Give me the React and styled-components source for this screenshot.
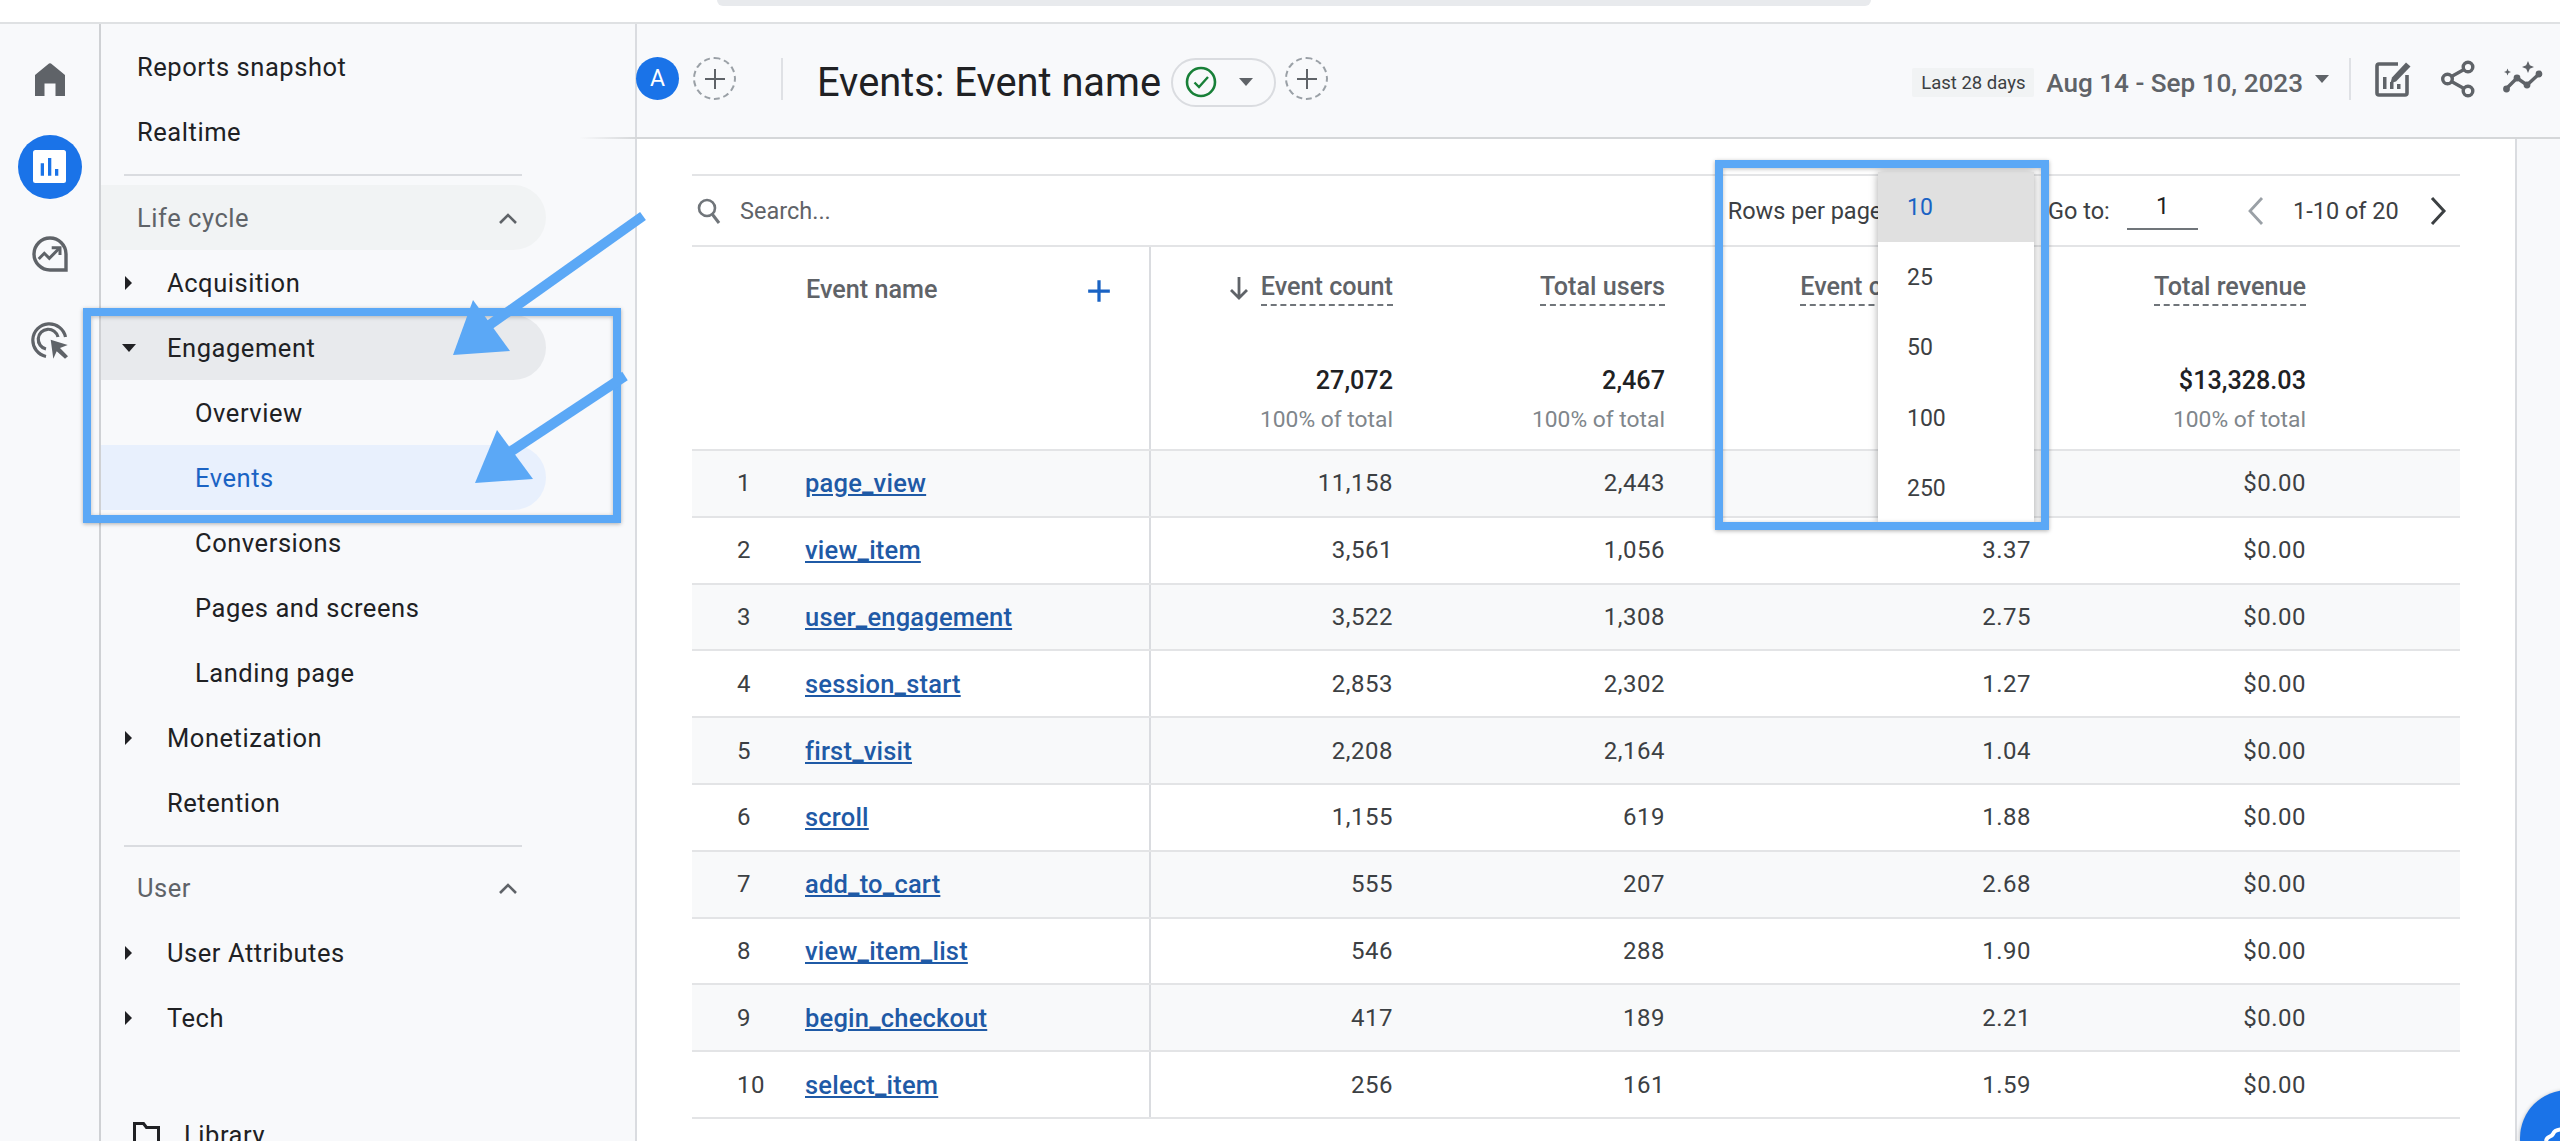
import React from "react";
import styled, { createGlobalStyle } from "styled-components";

const GlobalStyle = createGlobalStyle`
  html, body {
    margin: 0;
    padding: 0;
    background: #ffffff;
    overflow: hidden;
  }
  * {
    box-sizing: border-box;
  }
`;

const Page = styled.div`
  position: relative;
  width: 2560px;
  height: 1141px;
  overflow: hidden;
  display: flex;
  flex-direction: column;
  font-family: Roboto, "Liberation Sans", sans-serif;
  color: #202124;
`;

const TopBar = styled.div`
  flex: none;
  height: 24px;
  background: #ffffff;
  border-bottom: 2px solid #dfe1e3;
  padding-left: 717px;
`;

const AddressBar = styled.div`
  width: 1154px;
  height: 6px;
  background: #e8eaed;
  border-radius: 0 0 8px 8px;
`;

const Body = styled.div`
  flex: 1;
  display: flex;
  min-height: 0;
`;

const Rail = styled.nav`
  flex: none;
  width: 101px;
  background: #f8f9fb;
  border-right: 2px solid #cfd1d4;
  padding-top: 12px;
`;

const RailItem = styled.div`
  height: 87px;
  display: flex;
  align-items: center;
  justify-content: center;
`;

const RailCircle = styled.div`
  width: 64px;
  height: 64px;
  border-radius: 50%;
  background: #1a73e8;
  display: flex;
  align-items: center;
  justify-content: center;
`;

const Sidebar = styled.aside`
  flex: none;
  width: 536px;
  background: #f8f9fb;
  border-right: 2px solid #dadce0;
  padding-top: 10px;
`;

const NavRow = styled.div`
  width: 445px;
  height: 65px;
  display: flex;
  align-items: center;
  padding-left: ${(p) => p.$indent}px;
  margin-top: ${(p) => p.$top || 0}px;
  font-size: 25.5px;
  letter-spacing: 0.55px;
  color: ${(p) => (p.$active ? "#1a63c4" : p.$section ? "#5f6368" : "#202124")};
  background: ${(p) =>
    p.$active ? "#e8f0fd" : p.$open ? "#e8eaed" : p.$shaded ? "#f1f3f4" : "transparent"};
  border-radius: ${(p) => (p.$active || p.$open || p.$shaded ? "0 33px 33px 0" : "0")};
`;

const CaretSlot = styled.span`
  flex: none;
  width: 45px;
  display: flex;
  justify-content: flex-start;
`;

const SectionChevron = styled.svg`
  margin-left: auto;
  margin-right: 27px;
`;

const FolderIcon = styled.svg`
  flex: none;
  margin-right: 24px;
`;

const Divider = styled.div`
  width: 398px;
  height: 2px;
  margin: 10px 0 ${(p) => p.$after}px 23px;
  background: #dadce0;
`;

const Main = styled.main`
  flex: 1;
  min-width: 0;
  display: flex;
  flex-direction: column;
  background: #f8f9fb;
`;

const Header = styled.header`
  position: relative;
  flex: none;
  height: 115px;
  display: flex;
  align-items: center;
  padding: 0 17px 4px 0;
  background: #f8f9fb;
  border-bottom: 2px solid #d5d7d9;

  &::before {
    content: "";
    position: absolute;
    left: -58px;
    bottom: -2px;
    width: 58px;
    height: 2px;
    background: linear-gradient(to right, rgba(218, 220, 224, 0), #d5d7d9);
  }
`;

const Avatar = styled.div`
  flex: none;
  width: 43px;
  height: 43px;
  margin-left: -1px;
  border-radius: 50%;
  background: #1a73e8;
  color: #ffffff;
  font-size: 23px;
  display: flex;
  align-items: center;
  justify-content: center;
`;

const AddCircle = styled.div`
  flex: none;
  width: 43px;
  height: 43px;
  margin-left: ${(p) => p.$left}px;
  border-radius: 50%;
  border: 2px dashed #9aa0a6;
  display: flex;
  align-items: center;
  justify-content: center;
`;

const HeaderRule = styled.div`
  flex: none;
  width: 2px;
  height: 42px;
  margin: 0 ${(p) => p.$right}px 0 ${(p) => p.$left}px;
  background: #dfe1e5;
`;

const Title = styled.h1`
  flex: none;
  margin: 8px 0 0;
  font-size: 39.8px;
  font-weight: 400;
  line-height: 48px;
  color: #202124;
`;

const StatusPill = styled.div`
  flex: none;
  width: 105px;
  height: 49px;
  margin: 7px 0 0 10px;
  padding-left: 12px;
  border: 2px solid #dadce0;
  border-radius: 25px;
  display: flex;
  align-items: center;
  gap: 22px;
`;

const DateGroup = styled.div`
  margin-left: auto;
  display: flex;
  align-items: center;
`;

const RangeChip = styled.span`
  width: 122px;
  height: 29px;
  margin-top: 8px;
  background: #f1f3f4;
  border-radius: 2px;
  font-size: 18.5px;
  color: #3c4043;
  display: flex;
  align-items: center;
  justify-content: center;
`;

const DateText = styled.span`
  margin: 8px 12px 0 12px;
  font-size: 26.1px;
  font-weight: 500;
  color: #5f6368;
  white-space: nowrap;
`;

const HeaderIcon = styled.svg`
  flex: none;
  margin-left: ${(p) => p.$left}px;
`;

const Content = styled.div`
  flex: 1;
  min-height: 0;
  width: 1880px;
  padding: 35px 0 0 55px;
  background: #ffffff;
  border-right: 2px solid #dadce0;
`;

const TableWrap = styled.section`
  width: 1768px;
`;

const Toolbar = styled.div`
  height: 73px;
  display: flex;
  align-items: center;
  border-top: 2px solid #e3e4e6;
  border-bottom: 2px solid #e3e4e6;
  padding-left: 4px;
  font-size: 23.5px;
  color: #5f6368;
`;

const SearchText = styled.span`
  margin-left: 18px;
`;

const RowsLabel = styled.span`
  margin-left: auto;
  margin-right: 160px;
  color: #3c4043;
  white-space: nowrap;
`;

const GoLabel = styled.span`
  color: #3c4043;
  width: 79px;
`;

const GoInput = styled.div`
  width: 71px;
  height: 38px;
  border-bottom: 2px solid #70757a;
  color: #202124;
  text-align: center;
  line-height: 28px;
`;

const Pager = styled.div`
  display: flex;
  align-items: center;
  margin-right: 13px;
  margin-left: 49px;
`;

const PagerText = styled.span`
  width: 108px;
  margin: 0 28px;
  color: #3c4043;
  white-space: nowrap;
`;

const Columns = "458.5px 242.5px 272px 366px 275px 1fr";

const HeadRow = styled.div`
  height: 204px;
  display: grid;
  grid-template-columns: ${Columns};
  border-bottom: 2px solid #e3e4e6;
`;

const NameHead = styled.div`
  border-right: 2px solid #dadce0;
  padding: 27px 37px 0 114px;
  display: flex;
  justify-content: space-between;
  font-size: 25.2px;
  font-weight: 500;
  line-height: 32px;
  color: #5f6368;

  & > svg {
    margin-top: 4px;
  }
`;

const MetricHead = styled.div`
  display: flex;
  flex-direction: column;
  align-items: flex-end;
  padding-top: 23px;
`;

const LabelLine = styled.div`
  display: flex;
  align-items: center;
  gap: 12px;
  height: 36px;
`;

const MetricLabel = styled.span`
  font-size: 25.2px;
  font-weight: 500;
  line-height: 34px;
  color: #5f6368;
  border-bottom: 2px dashed #70757a;
  white-space: nowrap;
`;

const TotalValue = styled.div`
  margin-top: 59px;
  font-size: 25.2px;
  font-weight: 500;
  line-height: 32px;
  color: #202124;
`;

const TotalShare = styled.div`
  margin-top: 7px;
  font-size: 22.8px;
  line-height: 32px;
  color: #80868b;
`;

const DataRow = styled.div`
  height: 66.8px;
  display: grid;
  grid-template-columns: ${Columns};
  align-items: stretch;
  border-bottom: 2px solid #e3e4e6;
  background: ${(p) => (p.$odd ? "#f8f9fa" : "#ffffff")};
  font-size: 24px;
  letter-spacing: 0.5px;
  color: #3c4043;
`;

const NameCell = styled.div`
  display: flex;
  align-items: center;
  padding-left: 45px;
  border-right: 2px solid #dadce0;
`;

const Rank = styled.span`
  width: 68px;
`;

const EventLink = styled.a`
  color: #1f5aa6;
  font-size: 25.5px;
  font-weight: 500;
  letter-spacing: 0.2px;
  text-decoration: underline;
`;

const ValueCell = styled.div`
  display: flex;
  align-items: center;
  justify-content: flex-end;
`;

const Dropdown = styled.ul`
  position: absolute;
  left: 1878px;
  top: 172px;
  width: 156px;
  height: 350px;
  margin: 0;
  padding: 0;
  list-style: none;
  background: #ffffff;
  box-shadow: 0 1px 8px rgba(0, 0, 0, 0.35);
  font-size: 23px;
`;

const DropdownItem = styled.li`
  height: 70.3px;
  padding-left: 29px;
  display: flex;
  align-items: center;
  background: ${(p) => (p.$selected ? "#e0e0e0" : "transparent")};
  color: ${(p) => (p.$selected ? "#1a63c4" : "#3c4043")};
`;

const HighlightBox = styled.div`
  position: absolute;
  left: ${(p) => p.$x}px;
  top: ${(p) => p.$y}px;
  width: ${(p) => p.$w}px;
  height: ${(p) => p.$h}px;
  border: 8px solid #5ba8f6;
  box-shadow: 0 1px 4px rgba(0, 0, 0, 0.3), inset 0 1px 4px rgba(0, 0, 0, 0.25);
`;

const ArrowLayer = styled.svg`
  position: absolute;
  left: 0;
  top: 0;
  width: 2560px;
  height: 1141px;
  pointer-events: none;
`;

const Fab = styled.div`
  position: absolute;
  left: 2520px;
  top: 1090px;
  width: 96px;
  height: 96px;
  border-radius: 50%;
  background: #1a73e8;
  box-shadow: 0 1px 4px rgba(0, 0, 0, 0.3);
`;

const FabMark = styled.svg`
  position: absolute;
  left: 24px;
  top: 36px;
`;

const Triangle = ({ open }) =>
  open ? (
    <svg width="14" height="8" viewBox="0 0 14 8">
      <path d="M0 0h14L7 8z" fill="#202124" />
    </svg>
  ) : (
    <svg width="14" height="16" viewBox="0 0 14 16">
      <path d="M3 1l7 7-7 7z" fill="#202124" />
    </svg>
  );

const Chevron = () => (
  <SectionChevron width="22" height="14" viewBox="0 0 22 14">
    <path d="M3 12l8-8 8 8" fill="none" stroke="#5f6368" strokeWidth="2.6" />
  </SectionChevron>
);

const Plus = ({ size = 24, color = "#5f6368", weight = 2 }) => (
  <svg width={size} height={size} viewBox="0 0 24 24">
    <path d="M12 2v20M2 12h20" stroke={color} strokeWidth={weight} fill="none" />
  </svg>
);

const rows = [
  ["page_view", "11,158", "2,443", "4.57"],
  ["view_item", "3,561", "1,056", "3.37"],
  ["user_engagement", "3,522", "1,308", "2.75"],
  ["session_start", "2,853", "2,302", "1.27"],
  ["first_visit", "2,208", "2,164", "1.04"],
  ["scroll", "1,155", "619", "1.88"],
  ["add_to_cart", "555", "207", "2.68"],
  ["view_item_list", "546", "288", "1.90"],
  ["begin_checkout", "417", "189", "2.21"],
  ["select_item", "256", "161", "1.59"],
];

const pageSizes = ["10", "25", "50", "100", "250"];

export default function App() {
  return (
    <Page>
      <GlobalStyle />
      <TopBar>
        <AddressBar />
      </TopBar>
      <Body>
        <Rail>
          <RailItem>
            <svg width="30" height="33" viewBox="0 0 30 33">
              <path
                d="M14 0.500Q15 0 16 0.500L30 12V33H20.500V20.500H9.500V33H0V12Z"
                fill="#5f6368"
              />
            </svg>
          </RailItem>
          <RailItem>
            <RailCircle>
              <svg width="33" height="33" viewBox="0 0 33 33">
                <rect width="33" height="33" rx="2.500" fill="#ffffff" />
                <path d="M7.700 13.300H11V25.700H7.700zM15 8h3.300V25.700H15zM22 19h3.300V25.700H22z" fill="#1a73e8" />
              </svg>
            </RailCircle>
          </RailItem>
          <RailItem>
            <svg width="36" height="36" viewBox="0 0 36 36">
              <path
                d="M34 18V34H18A16 16 0 1 1 34 18Z"
                fill="none"
                stroke="#5f6368"
                strokeWidth="3.400"
              />
              <path d="M6.700 23l5.600-5.700 5 5 10-10" fill="none" stroke="#5f6368" strokeWidth="3" />
              <path d="M19.700 11.700H28V19" fill="none" stroke="#5f6368" strokeWidth="3" />
              <circle cx="30.500" cy="30.500" r="1.500" fill="#f8f9fb" />
            </svg>
          </RailItem>
          <RailItem>
            <svg width="38" height="38" viewBox="0 0 38 38">
              <path d="M34.500 15A16.500 16.500 0 1 0 15 34.500" fill="none" stroke="#5f6368" strokeWidth="3.200" />
              <path d="M27 15A10 10 0 1 0 15 27" fill="none" stroke="#5f6368" strokeWidth="3.200" />
              <path d="M19.700 17.700L36.700 23L29 26L37 34.300L34 36.700L25.700 29.300L22.300 36.700Z" fill="#5f6368" />
            </svg>
          </RailItem>
        </Rail>

        <Sidebar>
          <NavRow $indent={36}>Reports snapshot</NavRow>
          <NavRow $indent={36}>Realtime</NavRow>
          <Divider $after={9} />
          <NavRow $indent={36} $section $shaded>
            Life cycle
            <Chevron />
          </NavRow>
          <NavRow $indent={21}>
            <CaretSlot>
              <Triangle />
            </CaretSlot>
            Acquisition
          </NavRow>
          <NavRow $indent={21} $open>
            <CaretSlot>
              <Triangle open />
            </CaretSlot>
            Engagement
          </NavRow>
          <NavRow $indent={94}>Overview</NavRow>
          <NavRow $indent={94} $active>
            Events
          </NavRow>
          <NavRow $indent={94}>Conversions</NavRow>
          <NavRow $indent={94}>Pages and screens</NavRow>
          <NavRow $indent={94}>Landing page</NavRow>
          <NavRow $indent={21}>
            <CaretSlot>
              <Triangle />
            </CaretSlot>
            Monetization
          </NavRow>
          <NavRow $indent={66}>Retention</NavRow>
          <Divider $after={8} />
          <NavRow $indent={36} $section>
            User
            <Chevron />
          </NavRow>
          <NavRow $indent={21}>
            <CaretSlot>
              <Triangle />
            </CaretSlot>
            User Attributes
          </NavRow>
          <NavRow $indent={21}>
            <CaretSlot>
              <Triangle />
            </CaretSlot>
            Tech
          </NavRow>
          <NavRow $indent={32} $top={52}>
            <FolderIcon width="27" height="26" viewBox="0 0 27 26">
              <path d="M1.500 24.500V1.500h9l3 4h12v19z" fill="none" stroke="#202124" strokeWidth="3" />
            </FolderIcon>
            Library
          </NavRow>
        </Sidebar>

        <Main>
          <Header>
            <Avatar>A</Avatar>
            <AddCircle $left={14}>
              <Plus />
            </AddCircle>
            <HeaderRule $left={45} $right={34} />
            <Title>Events: Event name</Title>
            <StatusPill>
              <svg width="32" height="32" viewBox="0 0 32 32">
                <circle cx="16" cy="16" r="14" fill="none" stroke="#188038" strokeWidth="2.600" />
                <path d="M9.500 16.500l4.500 4.500 9-10" fill="none" stroke="#188038" strokeWidth="2.400" />
              </svg>
              <svg width="14" height="8" viewBox="0 0 14 8">
                <path d="M0 0h14L7 8z" fill="#5f6368" />
              </svg>
            </StatusPill>
            <AddCircle $left={9}>
              <Plus />
            </AddCircle>
            <DateGroup>
              <RangeChip>Last 28 days</RangeChip>
              <DateText>Aug 14 - Sep 10, 2023</DateText>
              <svg width="14" height="8" viewBox="0 0 14 8">
                <path d="M0 0h14L7 8z" fill="#5f6368" />
              </svg>
              <HeaderRule $left={20} $right={0} />
              <HeaderIcon $left={23} width="38" height="38" viewBox="0 0 38 38">
                <path
                  d="M24 4H5a2 2 0 0 0-2 2V33a2 2 0 0 0 2 2H31a2 2 0 0 0 2-2V15"
                  fill="none"
                  stroke="#5f6368"
                  strokeWidth="3.600"
                />
                <path d="M18 17.500L32 2.500l4.500 4L22 21.500l-5.500 1.500z" fill="#5f6368" />
                <path d="M9 17h3.500v12H9zM16 22h3.500v7H16zM23 24h3.500v5H23z" fill="#5f6368" />
              </HeaderIcon>
              <HeaderIcon $left={29} width="36" height="38" viewBox="0 0 36 38">
                <circle cx="27" cy="7" r="4.800" fill="none" stroke="#5f6368" strokeWidth="3.400" />
                <circle cx="6.500" cy="19" r="4.800" fill="none" stroke="#5f6368" strokeWidth="3.400" />
                <circle cx="27" cy="31" r="4.800" fill="none" stroke="#5f6368" strokeWidth="3.400" />
                <path d="M10.500 16.500L23 9.500M10.500 21.500l12.500 7" stroke="#5f6368" strokeWidth="3.400" fill="none" />
              </HeaderIcon>
              <HeaderIcon $left={26} width="40" height="36" viewBox="0 0 40 36">
                <path d="M3 28L14 17l10 7L36 13" fill="none" stroke="#5f6368" strokeWidth="3.400" />
                <circle cx="3.500" cy="28" r="3.400" fill="#5f6368" />
                <circle cx="14" cy="17" r="3.400" fill="#5f6368" />
                <circle cx="24" cy="24" r="3.400" fill="#5f6368" />
                <circle cx="36" cy="13" r="3.400" fill="#5f6368" />
                <path d="M25 0l1.800 4.200L31 6l-4.200 1.800L25 12l-1.800-4.200L19 6l4.200-1.800z" fill="#5f6368" />
                <path d="M4.500 7.500l1 2.500 2.500 1-2.500 1-1 2.500-1-2.500-2.500-1 2.500-1z" fill="#5f6368" />
              </HeaderIcon>
            </DateGroup>
          </Header>

          <Content>
            <TableWrap>
              <Toolbar>
                <svg width="26" height="28" viewBox="0 0 26 28">
                  <circle cx="11" cy="11" r="8" fill="none" stroke="#70757a" strokeWidth="2.600" />
                  <path d="M16.500 17.500L23 26" stroke="#70757a" strokeWidth="3" fill="none" />
                </svg>
                <SearchText>Search...</SearchText>
                <RowsLabel>Rows per page:</RowsLabel>
                <GoLabel>Go to:</GoLabel>
                <GoInput>1</GoInput>
                <Pager>
                  <svg width="18" height="30" viewBox="0 0 18 30">
                    <path d="M15 2L3 15l12 13" fill="none" stroke="#9aa0a6" strokeWidth="2.800" />
                  </svg>
                  <PagerText>1-10 of 20</PagerText>
                  <svg width="18" height="30" viewBox="0 0 18 30">
                    <path d="M3 2l12 13L3 28" fill="none" stroke="#3c4043" strokeWidth="3" />
                  </svg>
                </Pager>
              </Toolbar>

              <HeadRow>
                <NameHead>
                  Event name
                  <Plus size={26} color="#1a63c4" weight={3} />
                </NameHead>
                <MetricHead>
                  <LabelLine>
                    <svg width="20" height="24" viewBox="0 0 20 24">
                      <path d="M10 1v21M2 14l8 8 8-8" fill="none" stroke="#5f6368" strokeWidth="2.800" />
                    </svg>
                    <MetricLabel>Event count</MetricLabel>
                  </LabelLine>
                  <TotalValue>27,072</TotalValue>
                  <TotalShare>100% of total</TotalShare>
                </MetricHead>
                <MetricHead>
                  <LabelLine>
                    <MetricLabel>Total users</MetricLabel>
                  </LabelLine>
                  <TotalValue>2,467</TotalValue>
                  <TotalShare>100% of total</TotalShare>
                </MetricHead>
                <MetricHead>
                  <LabelLine>
                    <MetricLabel>Event count per user</MetricLabel>
                  </LabelLine>
                </MetricHead>
                <MetricHead>
                  <LabelLine>
                    <MetricLabel>Total revenue</MetricLabel>
                  </LabelLine>
                  <TotalValue>$13,328.03</TotalValue>
                  <TotalShare>100% of total</TotalShare>
                </MetricHead>
              </HeadRow>

              {rows.map(([name, count, users, perUser], i) => (
                <DataRow key={name} $odd={i % 2 === 0}>
                  <NameCell>
                    <Rank>{i + 1}</Rank>
                    <EventLink>{name}</EventLink>
                  </NameCell>
                  <ValueCell>{count}</ValueCell>
                  <ValueCell>{users}</ValueCell>
                  <ValueCell>{perUser}</ValueCell>
                  <ValueCell>$0.00</ValueCell>
                </DataRow>
              ))}
            </TableWrap>
          </Content>
        </Main>
      </Body>

      <Dropdown>
        {pageSizes.map((size, i) => (
          <DropdownItem key={size} $selected={i === 0}>
            {size}
          </DropdownItem>
        ))}
      </Dropdown>

      <HighlightBox $x={83} $y={308} $w={538} $h={215} />
      <HighlightBox $x={1715} $y={160} $w={334} $h={370} />

      <ArrowLayer viewBox="0 0 2560 1141">
        <path d="M643 216L488 326" stroke="#5ba8f6" strokeWidth="10" fill="none" />
        <path d="M473 300L453 355L510 351Z" fill="#5ba8f6" />
        <path d="M625 376L510 452" stroke="#5ba8f6" strokeWidth="10" fill="none" />
        <path d="M497 430L475 483L533 479Z" fill="#5ba8f6" />
      </ArrowLayer>

      <Fab>
        <FabMark width="20" height="18" viewBox="0 0 20 18">
          <path d="M2 15C3 9 7 12 9 8C11 3 15 4 19 3" fill="none" stroke="#ffffff" strokeWidth="4" />
        </FabMark>
      </Fab>
    </Page>
  );
}
